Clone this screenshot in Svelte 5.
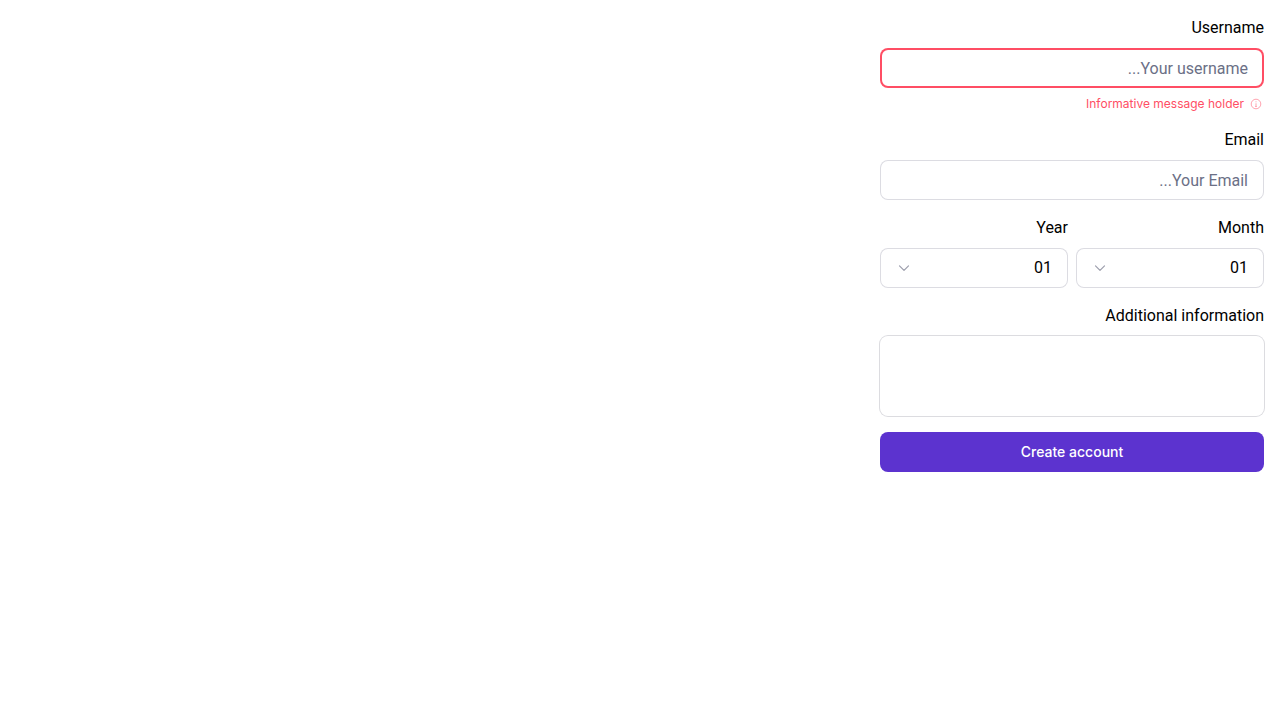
<script>
  const options = ['01', '02', '03', '04', '05', '06'];
  const selects = [
    { id: 'month', label: 'Month' },
    { id: 'year', label: 'Year' }
  ];
</script>

<form dir="rtl">
  <div class="field">
    <label for="username">Username</label>
    <input id="username" class="control invalid" type="text" placeholder="Your username..." aria-describedby="username-message" />
    <p id="username-message">
      <svg width="12" height="12" viewBox="0 0 12 12" fill="none" stroke="#ff8c9b" aria-hidden="true">
        <circle cx="6" cy="6" r="4.8" stroke-width="0.8" />
        <path d="M6 5.3v3.2M6 3.3v1M5.2 8.5h1.6" stroke-width="0.8" />
      </svg>
      <span>Informative message holder</span>
    </p>
  </div>
  <div class="field">
    <label for="email">Email</label>
    <input id="email" class="control" type="email" placeholder="Your Email..." />
  </div>
  <div class="pair">
    {#each selects as item}
      <div class="field">
        <label for={item.id}>{item.label}</label>
        <div class="select">
          <select id={item.id} class="control">
            {#each options as option}
              <option>{option}</option>
            {/each}
          </select>
          <svg width="16" height="16" viewBox="0 0 16 16" fill="none" stroke="currentColor" aria-hidden="true">
            <path d="M3.5 5.8 8 10.3l4.5-4.5" stroke-width="1.2" stroke-linecap="round" stroke-linejoin="round" />
          </svg>
        </div>
      </div>
    {/each}
  </div>
  <div class="field">
    <label for="info">Additional information</label>
    <textarea id="info"></textarea>
  </div>
  <button type="button">Create account</button>
</form>

<style>
  :global(body) {
    margin: 0;
    background: #fff;
    font-family: Roboto, sans-serif;
  }
  form {
    box-sizing: border-box;
    max-width: 416px;
    margin-left: auto;
    padding: 16px;
    display: flex;
    flex-direction: column;
    gap: 16px;
    color: #000;
    font-size: 16px;
    line-height: 24px;
  }
  .field {
    display: flex;
    flex-direction: column;
    gap: 8px;
    flex: 1;
    min-width: 0;
  }
  .control {
    box-sizing: border-box;
    width: 100%;
    height: 40px;
    margin: 0;
    padding: 0 16px;
    border: 0;
    border-radius: 8px;
    box-shadow: inset 0 0 0 1px #dcdce2;
    background: #fff;
    color: #000;
    font: inherit;
    outline: none;
    appearance: none;
  }
  .invalid {
    box-shadow: inset 0 0 0 2px #ff4e64;
  }
  .control::placeholder {
    color: #6b7086;
    opacity: 1;
  }
  p {
    margin: 0;
    display: flex;
    align-items: center;
    gap: 6px;
    padding-right: 2px;
    color: #ff4e64;
    font-family: Inter, sans-serif;
    font-size: 12px;
    line-height: 16px;
  }
  .pair {
    display: flex;
    gap: 8px;
  }
  .select {
    display: grid;
    align-items: center;
  }
  .select > * {
    grid-area: 1 / 1;
  }
  .select svg {
    justify-self: end;
    margin-left: 16px;
    color: #9c9eac;
    pointer-events: none;
  }
  textarea {
    box-sizing: border-box;
    width: 100%;
    height: 80px;
    padding: 8px 16px;
    border: 0;
    border-radius: 8px;
    box-shadow: 0 0 0 1px #dcdce0;
    background: #fff;
    color: #000;
    font: inherit;
    outline: none;
    resize: none;
  }
  button {
    height: 40px;
    border: 0;
    border-radius: 8px;
    background: #5c33cf;
    color: #fff;
    font: 500 14px/24px Inter, sans-serif;
  }
</style>
